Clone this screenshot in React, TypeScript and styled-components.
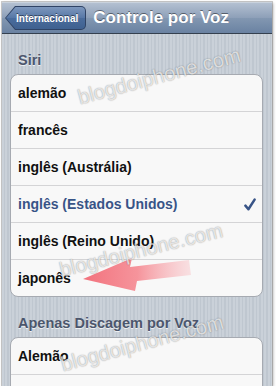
import styled, { createGlobalStyle } from "styled-components";

const GlobalStyle = createGlobalStyle`
  html, body {
    margin: 0;
    padding: 0;
    background: #fff;
  }
  body {
    font-family: "Liberation Sans", Arial, sans-serif;
  }
`;

const Frame = styled.div`
  position: relative;
  width: 270px;
  height: 384px;
  margin: 2px 0 0 2px;
  overflow: hidden;
  display: flex;
  flex-direction: column;
  background: repeating-linear-gradient(
    90deg,
    #cad1d9 0 2px,
    #bfc7d0 2px 3.5px
  );
  box-shadow: 0 0 0 1px rgba(110, 110, 110, 0.35), 1px 1px 3px rgba(0, 0, 0, 0.35);
`;

const NavBar = styled.div`
  flex: none;
  display: flex;
  align-items: center;
  gap: 7px;
  padding-left: 3px;
  background: linear-gradient(#b3c0d1 0%, #8d9fb8 50%, #8297b1 51%, #6a82a2 100%);
  border-top: 1px solid #c9d2dd;
  border-bottom: 1px solid #34404f;
  box-sizing: border-box;
  height: 32px;
`;

const BackOuter = styled.div`
  height: 24px;
  padding: 1px;
  box-sizing: border-box;
  background: #2f4365;
  clip-path: polygon(0 50%, 10px 0, 100% 0, 100% 100%, 10px 100%);
  border-radius: 0 5px 5px 0;
`;

const BackInner = styled.div`
  height: 100%;
  display: flex;
  align-items: center;
  padding: 0 7px 0 10px;
  background: linear-gradient(#7d97bd 0%, #5677a6 50%, #4a6c9c 51%, #3f6190 100%);
  clip-path: polygon(0 50%, 9.5px 0, 100% 0, 100% 100%, 9.5px 100%);
  border-radius: 0 4px 4px 0;
  color: #fff;
  font-size: 10px;
  font-weight: bold;
  text-shadow: 0 -1px 0 rgba(0, 0, 0, 0.5);
`;

const Title = styled.div`
  color: #fff;
  font-size: 17px;
  font-weight: bold;
  text-shadow: 0 -1px 0 rgba(0, 0, 0, 0.45);
`;

const SectionHeader = styled.div`
  padding: 18px 0 6px 16px;
  font-size: 14.5px;
  line-height: 16px;
  font-weight: bold;
  color: #4c566c;
  text-shadow: 0 1px 0 rgba(255, 255, 255, 0.7);
`;

const Group = styled.div`
  flex: none;
  margin: 0 9px 0 8px;
  border: 1px solid #a6aab1;
  border-radius: 8px;
  background: #f8f8f8;
  overflow: hidden;
`;

const Row = styled.div<{ $selected?: boolean }>`
  height: 36px;
  display: flex;
  align-items: center;
  justify-content: space-between;
  padding: 0 6px 0 7px;
  font-size: 14px;
  font-weight: bold;
  color: ${(p) => (p.$selected ? "#385487" : "#111")};
  & + & {
    border-top: 1px solid #d4d4d6;
  }
`;

const Watermark = styled.div<{ $x: number; $y: number; $rot: number }>`
  position: absolute;
  left: ${(p) => p.$x}px;
  top: ${(p) => p.$y}px;
  transform: translate(-50%, -50%) rotate(${(p) => p.$rot}deg);
  font-size: 20.5px;
  white-space: nowrap;
  color: rgba(255, 255, 255, 0.72);
  text-shadow: 0 0 1px rgba(0, 0, 0, 0.35), 0 0 2px rgba(0, 0, 0, 0.12);
  pointer-events: none;
`;

const ArrowSvg = styled.svg`
  position: absolute;
  left: 0;
  top: 0;
  pointer-events: none;
`;

const Check = () => (
  <svg width="12" height="13" viewBox="0 0 12 13">
    <path
      d="M1.4 7.6 L4.4 11.2 L10.6 1.6"
      fill="none"
      stroke="#385487"
      strokeWidth="2.5"
      strokeLinecap="round"
      strokeLinejoin="round"
    />
  </svg>
);

const siri = [
  "alemão",
  "francês",
  "inglês (Austrália)",
  "inglês (Estados Unidos)",
  "inglês (Reino Unido)",
  "japonês",
];

export default function App() {
  return (
    <>
      <GlobalStyle />
      <Frame>
        <NavBar>
          <BackOuter>
            <BackInner>Internacional</BackInner>
          </BackOuter>
          <Title>Controle por Voz</Title>
        </NavBar>
        <SectionHeader>Siri</SectionHeader>
        <Group>
          {siri.map((s) => (
            <Row key={s} $selected={s === "inglês (Estados Unidos)"}>
              {s}
              {s === "inglês (Estados Unidos)" && <Check />}
            </Row>
          ))}
        </Group>
        <SectionHeader>Apenas Discagem por Voz</SectionHeader>
        <Group>
          <Row>Alemão</Row>
          <Row />
        </Group>

        <ArrowSvg width="270" height="384" viewBox="2 2 270 384">
          <defs>
            <linearGradient id="arrowFill" x1="83" y1="0" x2="192" y2="0" gradientUnits="userSpaceOnUse">
              <stop offset="0" stopColor="#f26a76" stopOpacity="0.95" />
              <stop offset="0.5" stopColor="#f5828b" stopOpacity="0.85" />
              <stop offset="1" stopColor="#f9b7bc" stopOpacity="0.35" />
            </linearGradient>
          </defs>
          <polygon
            points="83,279 132,258 130,267 189,260 191,275 137,281 135,291"
            fill="url(#arrowFill)"
          />
        </ArrowSvg>
        <Watermark $x={157} $y={74} $rot={-15}>blogdoiphone.com</Watermark>
        <Watermark $x={139} $y={248} $rot={-14}>blogdoiphone.com</Watermark>
        <Watermark $x={140} $y={341} $rot={-15}>blogdoiphone.com</Watermark>
      </Frame>
    </>
  );
}
